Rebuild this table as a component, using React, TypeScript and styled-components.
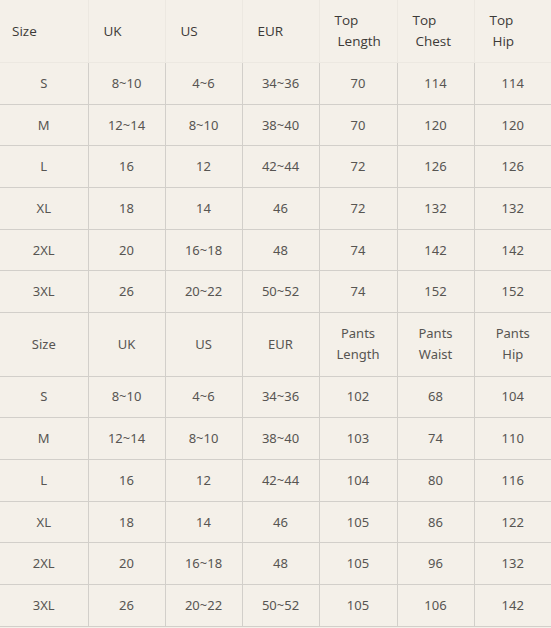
import React from "react";
import styled, { createGlobalStyle } from "styled-components";

const GlobalStyle = createGlobalStyle`
    html, body {
        margin: 0;
        padding: 0;
        background-color: #f4f0e9;
    }
`;

const Wrap = styled.div`
    width: 551px;
    overflow: hidden;
    background-color: #f4f0e9;
`;

const Table = styled.table`
    width: 551px;
    border-collapse: collapse;
    table-layout: fixed;
    font-family: "Noto Sans", "Open Sans", sans-serif;
    color: #575552;
`;

const Row = styled.tr<{ h: number }>`
    height: ${props => props.h}px;
`;

const TopHead = styled.td`
    font-family: "Open Sans", "Noto Sans", sans-serif;
    font-size: 13.5px;
    line-height: 21px;
    color: #3c3a37;
    text-align: left;
    padding: 0 0 0 15px;
    border: 1px solid #ece8e1;
    border-top: none;
    &:first-child {
        padding-left: 12px;
        border-left: none;
    }
    &:last-child {
        border-right: none;
    }
`;

const Indent = styled.span`
    padding-left: 3px;
`;

const Cell = styled.td`
    font-size: 13px;
    line-height: 21px;
    text-align: center;
    padding: 0;
    border: 1px solid #d2cfca;
    &:first-child {
        border-left: none;
    }
    &:last-child {
        border-right: none;
    }
`;

const topRows = [
    ["S", "8~10", "4~6", "34~36", "70", "114", "114"],
    ["M", "12~14", "8~10", "38~40", "70", "120", "120"],
    ["L", "16", "12", "42~44", "72", "126", "126"],
    ["XL", "18", "14", "46", "72", "132", "132"],
    ["2XL", "20", "16~18", "48", "74", "142", "142"],
    ["3XL", "26", "20~22", "50~52", "74", "152", "152"],
];

const pantsRows = [
    ["S", "8~10", "4~6", "34~36", "102", "68", "104"],
    ["M", "12~14", "8~10", "38~40", "103", "74", "110"],
    ["L", "16", "12", "42~44", "104", "80", "116"],
    ["XL", "18", "14", "46", "105", "86", "122"],
    ["2XL", "20", "16~18", "48", "105", "96", "132"],
    ["3XL", "26", "20~22", "50~52", "105", "106", "142"],
];

export default function App() {
    return (
        <Wrap>
            <GlobalStyle />
            <Table>
                <colgroup>
                    <col style={{ width: 88 }} />
                    <col style={{ width: 77 }} />
                    <col style={{ width: 77 }} />
                    <col style={{ width: 77 }} />
                    <col style={{ width: 78 }} />
                    <col style={{ width: 77 }} />
                    <col style={{ width: 77 }} />
                </colgroup>
                <tbody>
                    <Row h={62.5}>
                        <TopHead>Size</TopHead>
                        <TopHead>UK</TopHead>
                        <TopHead>US</TopHead>
                        <TopHead>EUR</TopHead>
                        <TopHead>Top<br /><Indent>Length</Indent></TopHead>
                        <TopHead>Top<br /><Indent>Chest</Indent></TopHead>
                        <TopHead>Top<br /><Indent>Hip</Indent></TopHead>
                    </Row>
                    {topRows.map((r, i) => (
                        <Row h={41.7} key={"t" + i}>
                            {r.map((v, j) => <Cell key={j}>{v}</Cell>)}
                        </Row>
                    ))}
                    <Row h={63.5}>
                        <Cell>Size</Cell>
                        <Cell>UK</Cell>
                        <Cell>US</Cell>
                        <Cell>EUR</Cell>
                        <Cell>Pants<br />Length</Cell>
                        <Cell>Pants<br />Waist</Cell>
                        <Cell>Pants<br />Hip</Cell>
                    </Row>
                    {pantsRows.map((r, i) => (
                        <Row h={41.7} key={"p" + i}>
                            {r.map((v, j) => <Cell key={j}>{v}</Cell>)}
                        </Row>
                    ))}
                </tbody>
            </Table>
        </Wrap>
    );
}
